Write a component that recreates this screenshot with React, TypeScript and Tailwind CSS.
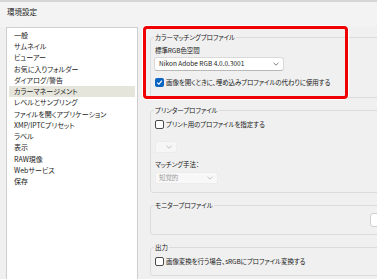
import React from "react";

const font = "font-['Noto_Sans_CJK_JP','Noto_Sans_CJK_SC',sans-serif] [font-feature-settings:'palt']";

function Check({ checked }: { checked?: boolean }) {
  if (checked) {
    return (
      <span className="w-[9px] h-[9px] rounded-[2px] bg-[#0a64c2] flex items-center justify-center shrink-0">
        <svg width="7" height="7" viewBox="0 0 7 7">
          <path d="M1.2 3.6 L2.9 5.2 L5.9 1.7" stroke="white" strokeWidth="1.1" fill="none" />
        </svg>
      </span>
    );
  }
  return <span className="w-[9px] h-[9px] rounded-[2px] border border-[#4a4a4a] bg-white shrink-0" />;
}

function Chevron({ color = "#606060" }: { color?: string }) {
  return (
    <svg width="6" height="4" viewBox="0 0 6 4" className="shrink-0">
      <path d="M0.5 0.8 L3 3.2 L5.5 0.8" stroke={color} strokeWidth="0.8" fill="none" />
    </svg>
  );
}

function Group({ title, className, children }: { title: string; className?: string; children?: React.ReactNode }) {
  return (
    <fieldset className={`border border-[#dcdcdc] rounded-[3px] w-[240px] pl-[4px] ${className ?? ""}`}>
      <legend className="-ml-[1px] px-[1px] text-[6.5px] leading-[9px] text-[#222]">{title}</legend>
      {children}
    </fieldset>
  );
}

const items = [
  "一般",
  "サムネイル",
  "ビューアー",
  "お気に入りフォルダー",
  "ダイアログ/警告",
  "カラーマネージメント",
  "レベルとサンプリング",
  "ファイルを開くアプリケーション",
  "XMP/IPTCプリセット",
  "ラベル",
  "表示",
  "RAW現像",
  "Webサービス",
  "保存",
];

export default function App() {
  return (
    <div className={`relative w-[377px] h-[279px] overflow-hidden bg-[#f0f0f0] text-[#1a1a1a] ${font}`}>
      <div className="h-[27px] bg-[#f3f3f3] border-t-[2px] border-[#d6d6d6] pl-[7px] pt-[5px] text-[7.5px] leading-[10px] text-[#222]">
        環境設定
      </div>
      <div className="flex">
        <div className="shrink-0 ml-[6px] w-[132px] h-[260px] bg-white border border-[#cfcfcf] pt-[1.4px]">
          {items.map((t, i) => (
            <div
              key={t}
              className={`h-[11.25px] flex items-center pl-[5px] mx-[2px] text-[7px] ${i === 5 ? "bg-[#e6e5dc]" : ""}`}
            >
              {t}
            </div>
          ))}
        </div>
        <div className="shrink-0 pl-[12px] flex flex-col text-[6.5px] tracking-[-0.1px]">
          <Group title="カラーマッチングプロファイル" className="mt-[6px] pb-[9px]">
            <div className="mt-[4px] h-[9px] leading-[9px]">標準RGB色空間</div>
            <div className="mt-[1.5px] -ml-[1px] w-[130px] h-[14px] bg-white border border-[#d9d9d9] border-b-[#b8b8b8] rounded-[3px] flex items-center justify-between pl-[4px] pr-[4px] tracking-normal">
              <span>Nikon Adobe RGB 4.0.0.3001</span>
              <Chevron />
            </div>
            <div className="mt-[7px] h-[10px] flex items-center gap-[2px]">
              <Check checked />
              <span>画像を開くときに、埋め込みプロファイルの代わりに使用する</span>
            </div>
          </Group>
          <Group title="プリンタープロファイル" className="mt-[8px] pb-[8px]">
            <div className="mt-[5px] h-[10px] flex items-center gap-[2px]">
              <Check />
              <span>プリント用のプロファイルを指定する</span>
            </div>
            <div className="mt-[11px] w-[22px] h-[12px] bg-[#f6f6f6] border border-[#ececec] rounded-[2px] flex items-center justify-end pr-[4px]">
              <Chevron color="#b0b0b0" />
            </div>
            <div className="mt-[7.5px] h-[9px] leading-[9px]">マッチング手法：</div>
            <div className="mt-[2.5px] w-[63px] h-[12px] bg-[#f8f8f8] border border-[#ececec] rounded-[2px] flex items-center justify-between pl-[3px] pr-[4px] text-[#9a9a9a]">
              <span>知覚的</span>
              <Chevron color="#b0b0b0" />
            </div>
          </Group>
          <Group title="モニタープロファイル" className="mt-[8px] pb-[7px]">
            <div className="mt-[3px] ml-[215px] w-[30px] h-[14px] bg-white border border-[#d0d0d0] rounded-[3px]" />
          </Group>
          <Group title="出力" className="mt-[8px] pb-[8px]">
            <div className="mt-[5px] h-[10px] flex items-center gap-[2px]">
              <Check />
              <span>画像変換を行う場合、sRGBにプロファイル変換する</span>
            </div>
          </Group>
        </div>
      </div>
      <div className="absolute left-[143px] top-[26px] w-[205px] h-[73px] border-[3.5px] border-[#f00000] rounded-[4px] shadow-[0_0_0_1px_#ffffff]" />
    </div>
  );
}
